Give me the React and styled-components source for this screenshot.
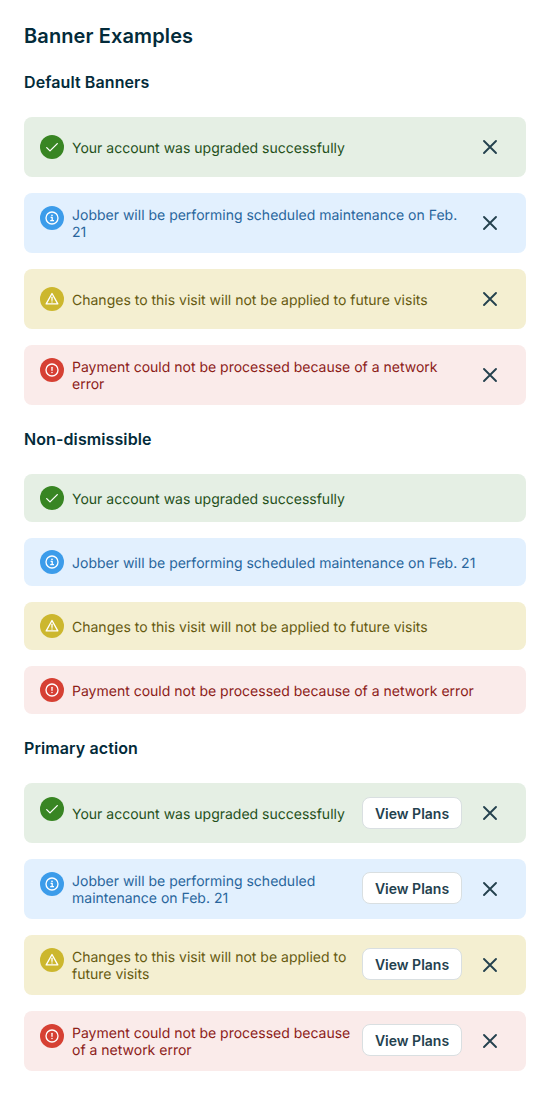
import React from "react";
import styled, { createGlobalStyle } from "styled-components";

const GlobalStyle = createGlobalStyle`
  *, *::before, *::after { box-sizing: border-box; }
  body {
    margin: 0;
    background: #ffffff;
    color: #032b3a;
    font-family: Inter, "Liberation Sans", sans-serif;
  }
`;

const palette = {
  success: { surface: "#e5efe4", text: "#24501a", icon: "#388523" },
  notice: { surface: "#e2f0fe", text: "#28659c", icon: "#3c9cea" },
  warning: { surface: "#f4efd1", text: "#665a10", icon: "#ccb72e" },
  error: { surface: "#faebea", text: "#8c2018", icon: "#d64033" },
};

const Page = styled.main`
  padding: 24px;
`;

const Title = styled.h1`
  margin: 0 0 24px;
  font-size: 20px;
  line-height: 24px;
  font-weight: 600;
  letter-spacing: 0.12px;
`;

const Section = styled.section`
  & + & {
    margin-top: 24px;
  }
`;

const SectionTitle = styled.h2`
  margin: 0 0 24px;
  font-size: 16px;
  line-height: 21px;
  font-weight: 600;
  letter-spacing: 0.1px;
`;

const BannerList = styled.div`
  display: flex;
  flex-direction: column;
  gap: 16px;
`;

const BannerFrame = styled.div`
  display: flex;
  align-items: center;
  gap: 8px;
  min-height: ${({ $tall }) => ($tall ? "60px" : "48px")};
  padding: 0 16px;
  border-radius: 8px;
  background: ${({ $type }) => palette[$type].surface};
  color: ${({ $type }) => palette[$type].text};
`;

const Content = styled.div`
  display: flex;
  flex: 1;
  min-width: 0;
  align-items: flex-start;
  gap: 8px;
`;

const IconBadge = styled.span`
  display: flex;
  flex: none;
  align-items: center;
  justify-content: center;
  width: 24px;
  height: 24px;
  border-radius: 50%;
  background: ${({ $type }) => palette[$type].icon};
`;

const Message = styled.p`
  flex: 1;
  align-self: center;
  margin: 1px 0 -1px;
  font-size: 14px;
  line-height: 17px;
  font-weight: 400;
  text-rendering: geometricPrecision;
`;

const ActionButton = styled.button`
  flex: none;
  width: 100px;
  height: 32px;
  padding: 0;
  border: 1px solid #d9dfe1;
  border-radius: 8px;
  background: #ffffff;
  color: #24414e;
  font: 600 14px/17px Inter, "Liberation Sans", sans-serif;
`;

const DismissButton = styled.button`
  display: flex;
  flex: none;
  align-items: center;
  justify-content: center;
  width: 40px;
  height: 40px;
  padding: 0;
  border: 0;
  background: transparent;
  color: #24414e;
`;

const Glyph = styled.svg`
  display: block;
  fill: none;
  stroke: currentColor;
  stroke-linecap: round;
  stroke-linejoin: round;
`;

function StatusIcon({ type }) {
  return (
    <IconBadge $type={type}>
      <Glyph width="16" height="16" viewBox="0 0 16 16" color="#ffffff" strokeWidth="1.33" aria-hidden="true">
        {type === "success" && <path d="M2.7 8.6 6 11.9 13.3 4.6" />}
        {type === "notice" && (
          <>
            <circle cx="8" cy="8" r="6" />
            <path d="M6.6 7.4h1.6v3.2M6.2 10.6h3.8" strokeLinecap="butt" />
            <circle cx="8" cy="5.3" r=".85" fill="currentColor" stroke="none" />
          </>
        )}
        {type === "warning" && (
          <>
            <path d="M8 2.5 13.8 12.9H2.2Z" />
            <path d="M8 6.2v3.1" />
            <circle cx="8" cy="11" r=".7" fill="currentColor" stroke="none" />
          </>
        )}
        {type === "error" && (
          <>
            <circle cx="8" cy="8" r="6" />
            <path d="M8 5.3v3" />
            <circle cx="8" cy="10.6" r=".75" fill="currentColor" stroke="none" />
          </>
        )}
      </Glyph>
    </IconBadge>
  );
}

function Banner({ type, children, dismissible, action }) {
  return (
    <BannerFrame $type={type} $tall={dismissible} role="status">
      <Content>
        <StatusIcon type={type} />
        <Message>{children}</Message>
        {action && <ActionButton type="button">{action}</ActionButton>}
      </Content>
      {dismissible && (
        <DismissButton type="button" aria-label="Dismiss">
          <Glyph width="24" height="24" viewBox="0 0 24 24" strokeWidth="1.9" aria-hidden="true">
            <path d="M6 6 18 18M18 6 6 18" />
          </Glyph>
        </DismissButton>
      )}
    </BannerFrame>
  );
}

const messages = [
  ["success", "Your account was upgraded successfully"],
  ["notice", "Jobber will be performing scheduled maintenance on Feb. 21"],
  ["warning", "Changes to this visit will not be applied to future visits"],
  ["error", "Payment could not be processed because of a network error"],
];

function BannerGroup({ title, ...options }) {
  return (
    <Section>
      <SectionTitle>{title}</SectionTitle>
      <BannerList>
        {messages.map(([type, text]) => (
          <Banner key={type} type={type} {...options}>
            {text}
          </Banner>
        ))}
      </BannerList>
    </Section>
  );
}

export default function App() {
  return (
    <>
      <GlobalStyle />
      <Page>
        <Title>Banner Examples</Title>
        <BannerGroup title="Default Banners" dismissible />
        <BannerGroup title="Non-dismissible" />
        <BannerGroup title="Primary action" dismissible action="View Plans" />
      </Page>
    </>
  );
}
